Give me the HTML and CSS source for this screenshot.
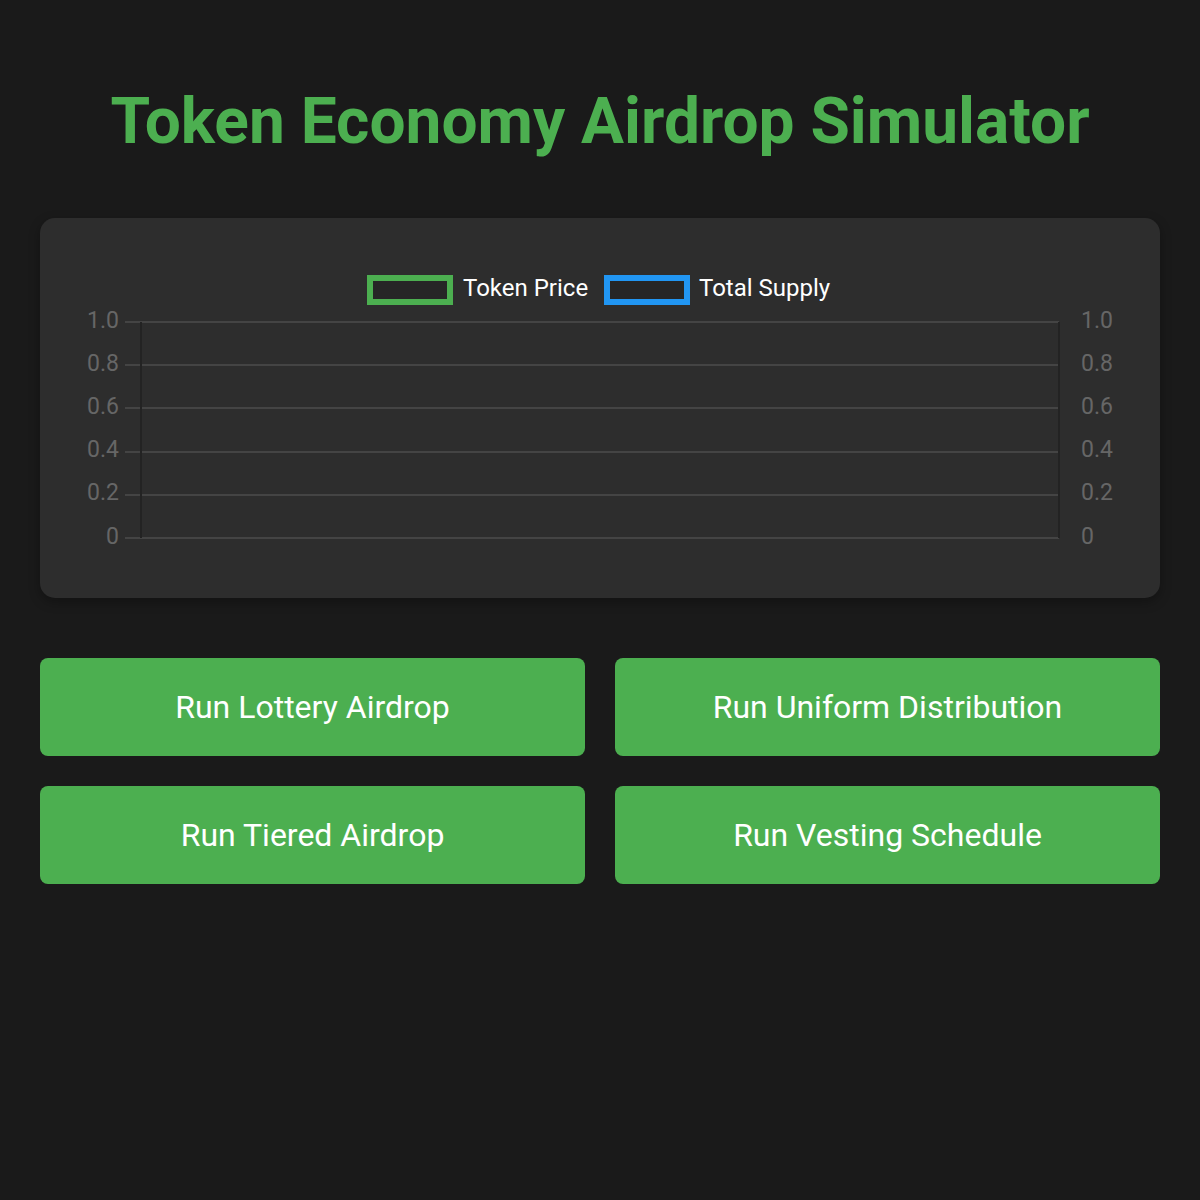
FILE: index.html
```html
<!DOCTYPE html>
<html lang="en">
<head>
    <meta charset="UTF-8">
    <meta name="viewport" content="width=device-width, initial-scale=1.0">
    <title>Token Economy Airdrop Simulator</title>
    <link rel="stylesheet" href="styles.css">
</head>
<body>
    <div class="container">
        <h1>Token Economy Airdrop Simulator</h1>

        <!-- price / supply chart -->
        <div class="chart-card">
            <svg class="chart" viewBox="0 0 1080 340" width="1080" height="340">
                <!-- legend -->
                <rect x="310" y="40" width="80" height="24" fill="#262626" stroke="#4caf50" stroke-width="6"/>
                <text class="legend-label" x="403" y="58">Token Price</text>
                <rect x="547" y="40" width="80" height="24" fill="#262626" stroke="#2196f3" stroke-width="6"/>
                <text class="legend-label" x="639" y="58">Total Supply</text>

                <!-- grid -->
                <g class="grid">
                    <line x1="65" y1="84" x2="999" y2="84"/>
                    <line x1="65" y1="127" x2="999" y2="127"/>
                    <line x1="65" y1="170" x2="999" y2="170"/>
                    <line x1="65" y1="214" x2="999" y2="214"/>
                    <line x1="65" y1="257" x2="999" y2="257"/>
                    <line x1="65" y1="300" x2="999" y2="300"/>
                </g>
                <g class="axis">
                    <line x1="81" y1="84" x2="81" y2="300"/>
                    <line x1="999" y1="84" x2="999" y2="300"/>
                </g>

                <!-- left ticks -->
                <g class="tick tick-left">
                    <text x="59" y="90">1.0</text>
                    <text x="59" y="133">0.8</text>
                    <text x="59" y="176">0.6</text>
                    <text x="59" y="219">0.4</text>
                    <text x="59" y="262">0.2</text>
                    <text x="59" y="306">0</text>
                </g>
                <!-- right ticks -->
                <g class="tick">
                    <text x="1021" y="90">1.0</text>
                    <text x="1021" y="133">0.8</text>
                    <text x="1021" y="176">0.6</text>
                    <text x="1021" y="219">0.4</text>
                    <text x="1021" y="262">0.2</text>
                    <text x="1021" y="306">0</text>
                </g>
            </svg>
        </div>

        <div class="controls">
            <button onclick="runSimulation('lottery')">Run Lottery Airdrop</button>
            <button onclick="runSimulation('uniform')">Run Uniform Distribution</button>
            <button onclick="runSimulation('tiered')">Run Tiered Airdrop</button>
            <button onclick="runSimulation('vesting')">Run Vesting Schedule</button>
        </div>
    </div>

    <script>
        function runSimulation(type) {
            // placeholder until the model is wired up
            console.log('simulate', type);
        }
    </script>
</body>
</html>
```

FILE: styles.css
```css
* {
    box-sizing: border-box;
    font-family: Roboto, "Liberation Sans", sans-serif;
}

body {
    margin: 0;
    padding: 40px;
    background-color: #1a1a1a;
    color: #fff;
    min-height: 100vh;
}

.container {
    max-width: 1120px;
    margin: 0 auto;
}

h1 {
    color: #4caf50;
    text-align: center;
    font-size: 64px;
    font-weight: 700;
    line-height: 1.2;
    margin: 44px 0 57px;
}

.chart-card {
    background: #2d2d2d;
    border-radius: 15px;
    box-shadow: 0 4px 12px rgba(0,0,0,0.3);
    padding: 20px;
    height: 380px;
}

.chart {
    display: block;
}

.legend-label {
    fill: #fff;
    font-size: 24px;
}

.grid line {
    stroke: #444;
    stroke-width: 2;
}

.axis line {
    stroke: #232323;
    stroke-width: 2;
}

.tick text {
    fill: #666;
    font-size: 23px;
}

.tick-left text {
    text-anchor: end;
}

.controls {
    display: grid;
    grid-template-columns: 1fr 1fr;
    gap: 30px;
    margin-top: 60px;
}

button {
    background-color: #4caf50;
    color: white;
    border: none;
    border-radius: 8px;
    padding: 30px;
    font-size: 32px;
    line-height: 38px;
    cursor: pointer;
}

button:hover {
    background-color: #45a049;
}
```
